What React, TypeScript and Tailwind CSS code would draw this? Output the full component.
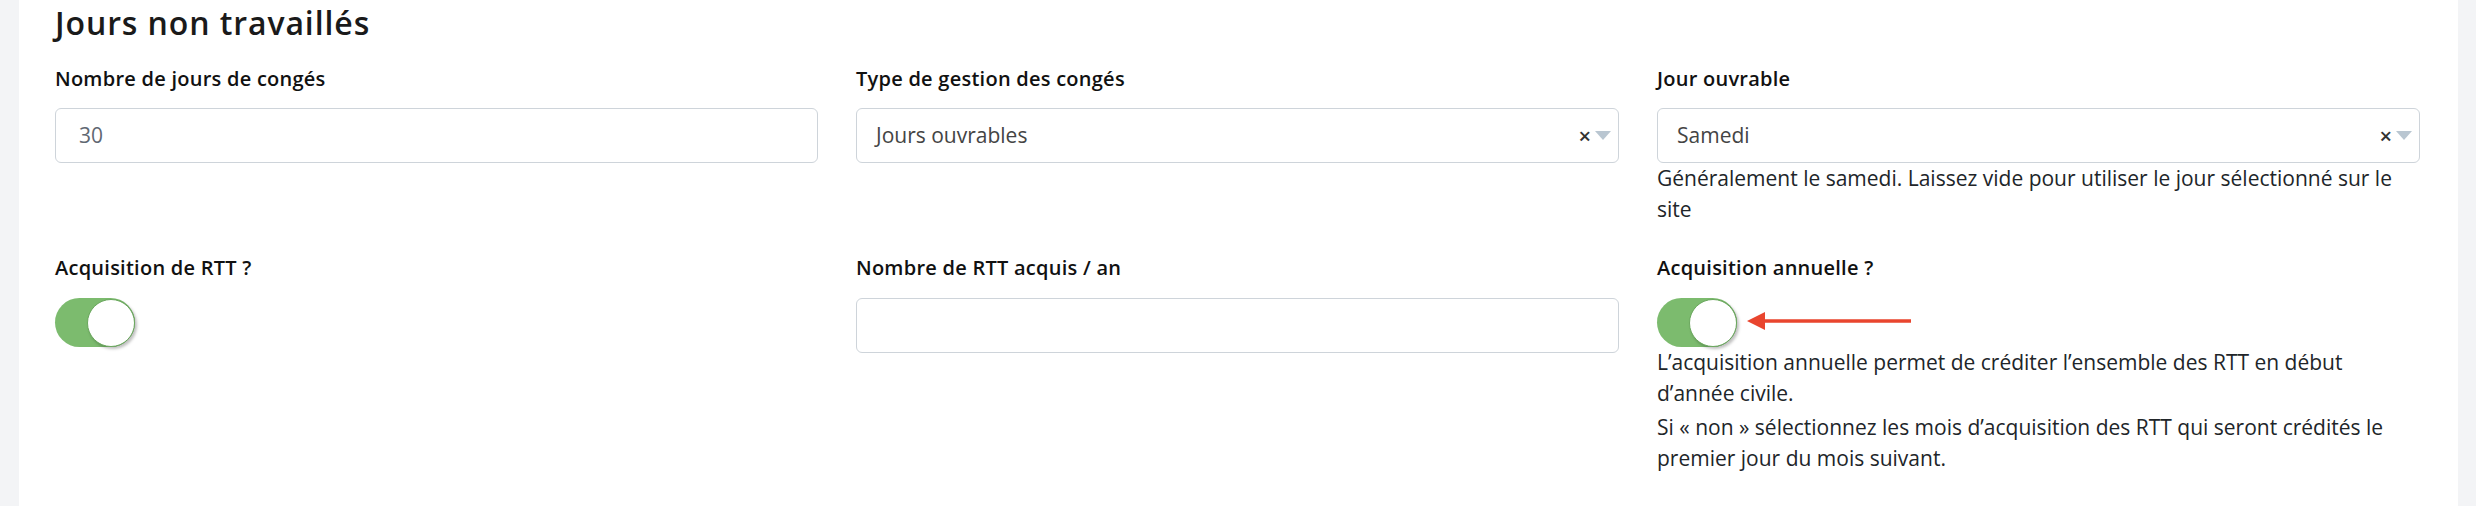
import React from "react";

const font = { fontFamily: '"Open Sans", "Noto Sans", sans-serif' };

function Label({ children }: { children: React.ReactNode }) {
  return <div className="text-[20px] leading-[24px] font-semibold tracking-[0.25px] text-[#111]">{children}</div>;
}

function Help({ children }: { children: React.ReactNode }) {
  return <div className="text-[21px] leading-[31px] text-[#212529]">{children}</div>;
}

function Toggle() {
  return (
    <div className="w-[80px] h-[49px] rounded-full bg-[#7cbb6e] flex justify-end items-center">
      <div className="w-[48px] h-[48px] rounded-full bg-white border border-[#6aa85d] shadow-[2px_2px_3px_rgba(0,0,0,0.25)]" />
    </div>
  );
}

function Select({ value }: { value: string }) {
  return (
    <div className="h-[55px] rounded-[6px] border border-[#ced4da] bg-white flex items-center pl-[19px] pr-[7px]">
      <span className="flex-1 text-[21px] text-[#444]">{value}</span>
      <span className="text-[22px] font-semibold text-[#333] mr-[4px]">×</span>
      <svg width="16" height="10" viewBox="0 0 16 10">
        <path d="M0 0 H16 L8 9 Z" fill="#b9c6d1" />
      </svg>
    </div>
  );
}

function Input({ value }: { value?: string }) {
  return (
    <div className="h-[55px] rounded-[6px] border border-[#ced4da] bg-white flex items-center px-[23px] text-[21px] text-[#5f6872]">
      {value}
    </div>
  );
}

export default function App() {
  return (
    <div style={font} className="w-[2476px] h-[506px] bg-[#f3f4f6] flex pl-[19px] pr-[18px]">
      <div className="flex-1 bg-white pl-[36px] pr-[38px]">
        <h2 className="pt-[3px] text-[32px] leading-[40px] font-semibold tracking-[0.9px] text-[#1a1a1a]">Jours non travaillés</h2>
        <div className="mt-[24px] grid grid-cols-3 gap-x-[38px] gap-y-[31px]">
          <div>
            <Label>Nombre de jours de congés</Label>
            <div className="mt-[17px]">
              <Input value="30" />
            </div>
          </div>
          <div>
            <Label>Type de gestion des congés</Label>
            <div className="mt-[17px]">
              <Select value="Jours ouvrables" />
            </div>
          </div>
          <div>
            <Label>Jour ouvrable</Label>
            <div className="mt-[17px]">
              <Select value="Samedi" />
            </div>
            <Help>Généralement le samedi. Laissez vide pour utiliser le jour sélectionné sur le site</Help>
          </div>

          <div>
            <Label>Acquisition de RTT ?</Label>
            <div className="mt-[18px]">
              <Toggle />
            </div>
          </div>
          <div>
            <Label>Nombre de RTT acquis / an</Label>
            <div className="mt-[18px]">
              <Input />
            </div>
          </div>
          <div>
            <Label>Acquisition annuelle ?</Label>
            <div className="mt-[18px] flex items-center">
              <Toggle />
              <svg width="164" height="18" viewBox="0 0 164 18" className="ml-[10px] -mt-[4px]">
                <path d="M0 9 L18 0 L18 7.3 H164 V10.7 H18 L18 18 Z" fill="#e9452e" />
              </svg>
            </div>
            <Help>
              <p>L’acquisition annuelle permet de créditer l’ensemble des RTT en début d’année civile.</p>
              <p className="mt-[3px]">
                Si « non » sélectionnez les mois d’acquisition des RTT qui seront crédités le premier jour du mois suivant.
              </p>
            </Help>
          </div>
        </div>
      </div>
    </div>
  );
}
